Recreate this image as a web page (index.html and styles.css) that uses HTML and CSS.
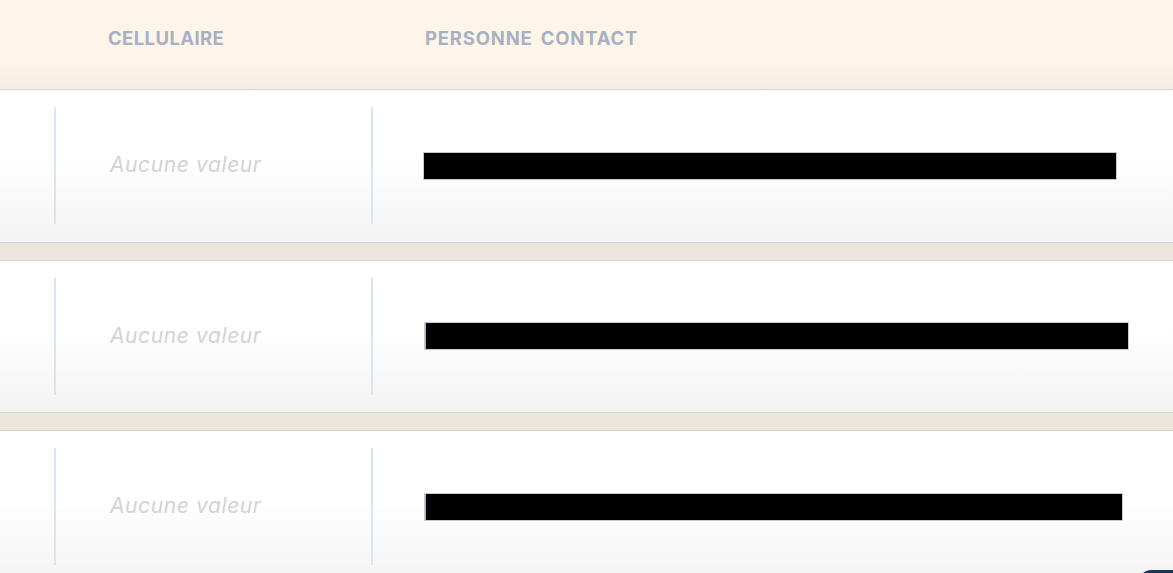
FILE: index.html
```html
<!DOCTYPE html>
<html lang="fr">
<head>
<meta charset="utf-8">
<title>Contacts</title>
<link rel="stylesheet" href="styles.css">
</head>
<body>
<div class="table">
  <div class="head">
    <div class="hcell hcell-1">CELLULAIRE</div>
    <div class="hcell hcell-2">PERSONNE CONTACT</div>
  </div>
  <div class="row">
    <div class="cell cell-1"><span class="empty">Aucune valeur</span></div>
    <div class="cell cell-2"><span class="redact" style="width:692px"></span></div>
  </div>
  <div class="sep"></div>
  <div class="row">
    <div class="cell cell-1"><span class="empty">Aucune valeur</span></div>
    <div class="cell cell-2"><span class="redact redact-mark" style="width:702px"></span></div>
  </div>
  <div class="sep"></div>
  <div class="row">
    <div class="cell cell-1"><span class="empty">Aucune valeur</span></div>
    <div class="cell cell-2"><span class="redact redact-mark" style="width:696px"></span></div>
  </div>
</div>
<div class="fab"></div>
</body>
</html>
```

FILE: styles.css
```css
html, body {
  margin: 0;
  padding: 0;
  height: 100%;
  overflow: hidden;
  background: #ffffff;
  font-family: "Inter", "Noto Sans", sans-serif;
}

.table {
  display: flex;
  flex-direction: column;
}

.head {
  height: 89px;
  flex: none;
  border-bottom: 1px solid #d9d6d2;
  background: linear-gradient(to bottom, #fdf4ea 0%, #fdf4ea 70%, #f4ebe1 100%);
  display: grid;
  grid-template-columns: 108px 317px 1fr;
  align-items: start;
}

.hcell {
  padding-top: 27px;
  font-weight: 700;
  font-size: 18.5px;
  letter-spacing: 0.4px;
  color: #a9b0c1;
  line-height: 22px;
}

.hcell-1 { grid-column: 2; }
.hcell-2 { grid-column: 3; letter-spacing: 0.8px; word-spacing: 3px; }

.row {
  flex: none;
  height: 152.5px;
  box-sizing: border-box;
  padding: 17px 0 17.5px;
  background: linear-gradient(to bottom, #ffffff 0%, #ffffff 45%, #f3f3f3 100%);
  display: grid;
  grid-template-columns: 54px 317px 1fr;
  border-bottom: 1px solid #d3d6d9;
}

.cell {
  border-left: 2px solid #d5e7f4;
  display: flex;
  align-items: center;
}

.cell-1 {
  grid-column: 2;
  padding-left: 54px;
  padding-bottom: 2px;
}

.cell-2 {
  grid-column: 3;
  padding-left: 51px;
}

.empty {
  font-style: italic;
  font-size: 21px;
  letter-spacing: 0.6px;
  color: #d3d3d3;
}

.redact {
  display: block;
  height: 26px;
  background: #000000;
  box-shadow: 0 0 0 1px #c9c9c9;
}

.redact-mark {
  margin-left: 1px;
  border-left: 1px solid #e3a849;
}

.sep {
  flex: none;
  height: 17px;
  background: #eee6dd;
  border-bottom: 1px solid #d3d6d9;
}

.fab {
  position: absolute;
  left: 1137px;
  top: 570px;
  width: 60px;
  height: 30px;
  border-radius: 16px;
  background: #163559;
}
```
